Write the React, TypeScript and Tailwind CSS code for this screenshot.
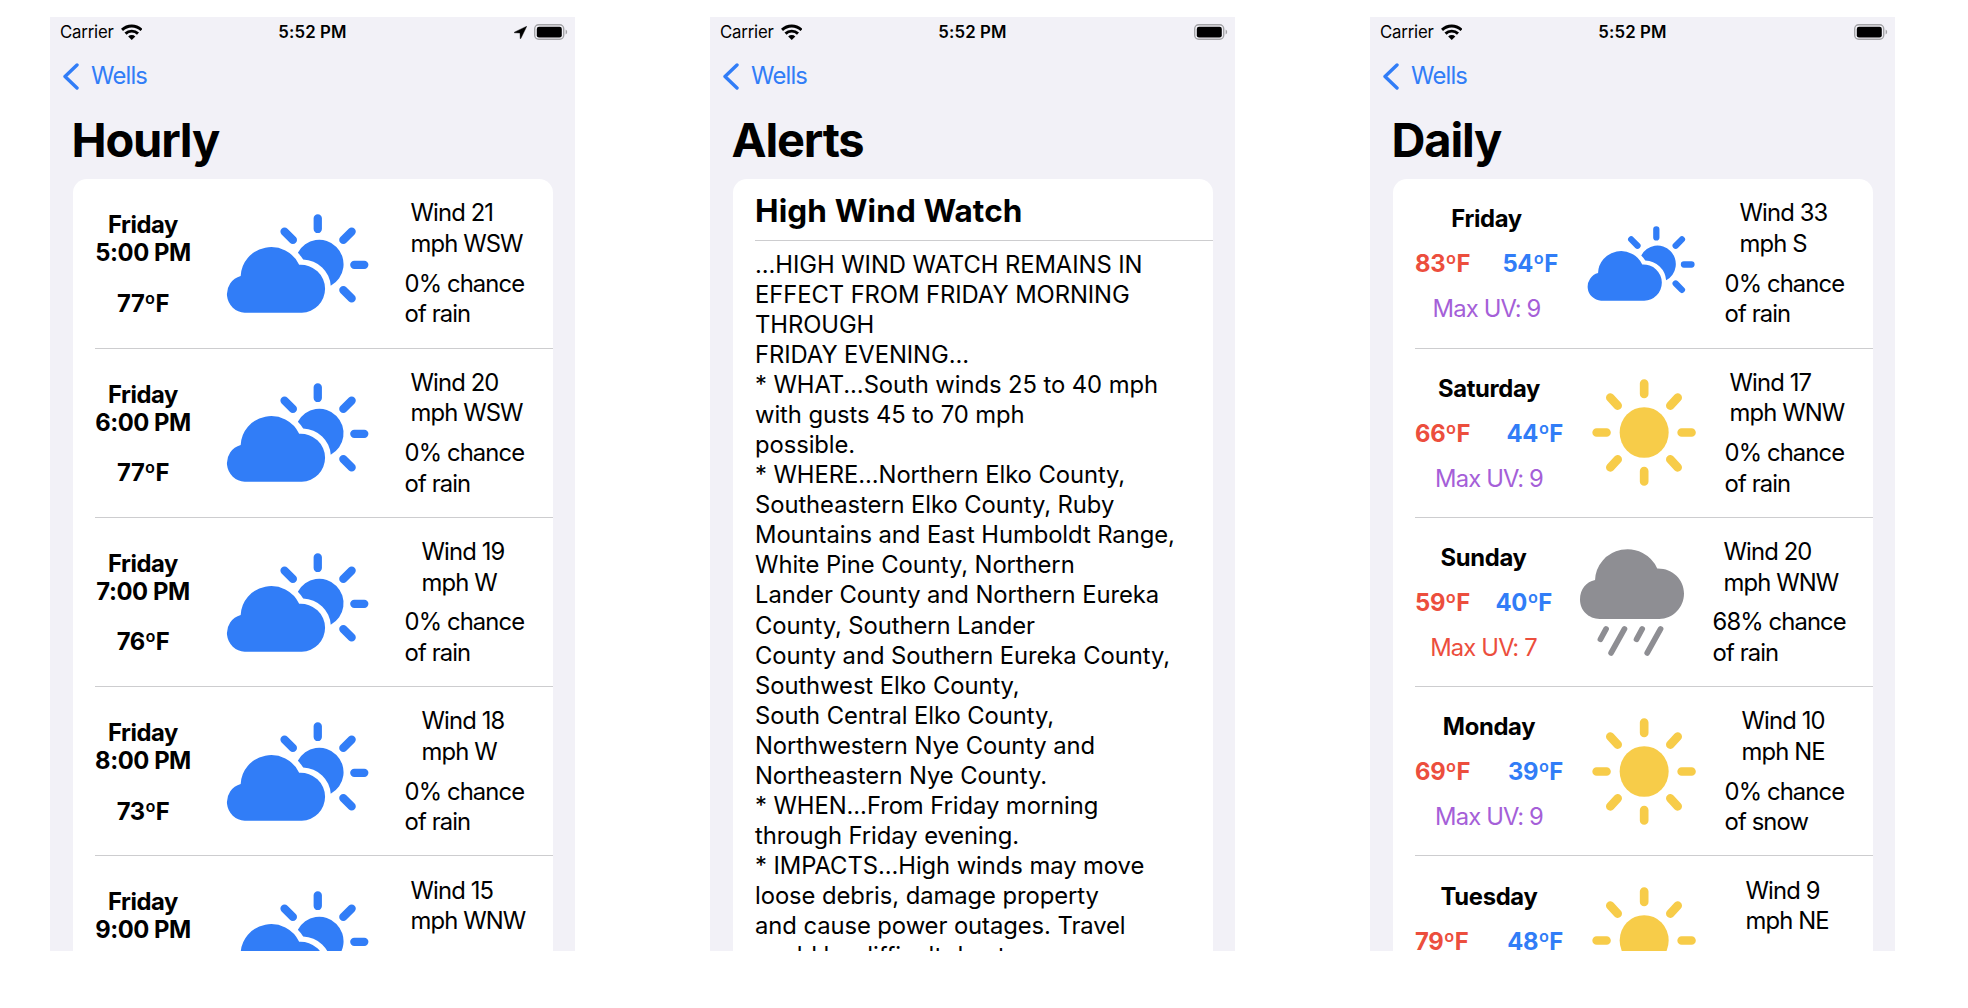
import type { ReactNode } from "react";

type IconKind = "cloudSun" | "sun" | "rain";

interface Conditions {
  wind: string[];
  windInset: string;
  chance: string[];
  rightWidth: string;
}

interface HourlyEntry extends Conditions {
  time: string;
  temp: string;
}

interface DailyEntry extends Conditions {
  day: string;
  high: string;
  low: string;
  uv: string;
  uvColor: string;
  icon: IconKind;
  leftWidth: string;
  iconInset: string;
}

const RAIN_0 = ["0% chance", "of rain"];
const SNOW_0 = ["0% chance", "of snow"];

const hourly: HourlyEntry[] = [
  { time: "5:00 PM", temp: "77ºF", wind: ["Wind 21", "mph WSW"], windInset: "pl-[6px]", chance: RAIN_0, rightWidth: "w-[148px]" },
  { time: "6:00 PM", temp: "77ºF", wind: ["Wind 20", "mph WSW"], windInset: "pl-[6px]", chance: RAIN_0, rightWidth: "w-[148px]" },
  { time: "7:00 PM", temp: "76ºF", wind: ["Wind 19", "mph W"], windInset: "pl-[17px]", chance: RAIN_0, rightWidth: "w-[148px]" },
  { time: "8:00 PM", temp: "73ºF", wind: ["Wind 18", "mph W"], windInset: "pl-[17px]", chance: RAIN_0, rightWidth: "w-[148px]" },
  { time: "9:00 PM", temp: "70ºF", wind: ["Wind 15", "mph WNW"], windInset: "pl-[6px]", chance: RAIN_0, rightWidth: "w-[148px]" },
];

const daily: DailyEntry[] = [
  { day: "Friday", high: "83ºF", low: "54ºF", uv: "9", uvColor: "text-[#a55fd8]", icon: "cloudSun", leftWidth: "w-[143px]", iconInset: "ml-[29px]", wind: ["Wind 33", "mph S"], windInset: "pl-[15px]", chance: RAIN_0, rightWidth: "w-[148px]" },
  { day: "Saturday", high: "66ºF", low: "44ºF", uv: "9", uvColor: "text-[#a55fd8]", icon: "sun", leftWidth: "w-[148px]", iconInset: "ml-[29px]", wind: ["Wind 17", "mph WNW"], windInset: "pl-[5px]", chance: RAIN_0, rightWidth: "w-[148px]" },
  { day: "Sunday", high: "59ºF", low: "40ºF", uv: "7", uvColor: "text-[#ec4e3d]", icon: "rain", leftWidth: "w-[137px]", iconInset: "ml-[28px]", wind: ["Wind 20", "mph WNW"], windInset: "pl-[11px]", chance: ["68% chance", "of rain"], rightWidth: "w-[160px]" },
  { day: "Monday", high: "69ºF", low: "39ºF", uv: "9", uvColor: "text-[#a55fd8]", icon: "sun", leftWidth: "w-[148px]", iconInset: "ml-[29px]", wind: ["Wind 10", "mph NE"], windInset: "pl-[17px]", chance: SNOW_0, rightWidth: "w-[148px]" },
  { day: "Tuesday", high: "79ºF", low: "48ºF", uv: "9", uvColor: "text-[#a55fd8]", icon: "sun", leftWidth: "w-[148px]", iconInset: "ml-[29px]", wind: ["Wind 9", "mph NE"], windInset: "pl-[21px]", chance: RAIN_0, rightWidth: "w-[148px]" },
];

const alertLines = [
  "...HIGH WIND WATCH REMAINS IN",
  "EFFECT FROM FRIDAY MORNING",
  "THROUGH",
  "FRIDAY EVENING...",
  "* WHAT...South winds 25 to 40 mph",
  "with gusts 45 to 70 mph",
  "possible.",
  "* WHERE...Northern Elko County,",
  "Southeastern Elko County, Ruby",
  "Mountains and East Humboldt Range,",
  "White Pine County, Northern",
  "Lander County and Northern Eureka",
  "County, Southern Lander",
  "County and Southern Eureka County,",
  "Southwest Elko County,",
  "South Central Elko County,",
  "Northwestern Nye County and",
  "Northeastern Nye County.",
  "* WHEN...From Friday morning",
  "through Friday evening.",
  "* IMPACTS...High winds may move",
  "loose debris, damage property",
  "and cause power outages. Travel",
  "could be difficult due to",
];

function CloudSunIcon({ className }: { className: string }) {
  return (
    <svg viewBox="18 28 430 298" className={`overflow-visible ${className}`} fill="#317df7" stroke="none">
      <path d="M74 325A56 56 0 0 1 62 215A92 90 0 0 1 238 181A74 72 0 0 1 316 253A71 72 0 0 1 246 325Z" />
      <path d="M234 145A73 73.500 0 1 1 333 244A86 84 0 0 0 250 165Q243 154 234 145Z" />
      <g stroke="#317df7" strokeWidth="25" strokeLinecap="round">
        <path d="M294 41V73M396 81L371 106M194 81L219 106M404 181H434M371 257L396 282" />
      </g>
    </svg>
  );
}

function SunIcon({ className }: { className: string }) {
  return (
    <svg viewBox="51 30 312 321" className={className}>
      <ellipse cx="207.5" cy="190.5" rx="73.5" ry="76" fill="#f7cc49" />
      <path
        d="M207.5 43.500V75M207.500 306V337.500M65 190.500H94.500M320 190.500H349.500M106 86L128 110M286 110L308 86M106 295L128 271M286 271L308 295"
        stroke="#f7cc49"
        strokeWidth="26"
        strokeLinecap="round"
        fill="none"
      />
    </svg>
  );
}

function RainIcon({ className }: { className: string }) {
  return (
    <svg viewBox="31 29 311 320" className={`overflow-visible ${className}`} fill="#8e8e93">
      <path d="M90 238C57 238 31 213 31 180C31 150 50 127 76 122A97 95 0 0 1 262 87C307 86 342 119 342 162C342 205 308 238 268 238Z" />
      <path
        d="M109 268L92 299M164 268L124 340M217 268L200 299M272 268L232 340"
        stroke="#8e8e93"
        strokeWidth="17"
        strokeLinecap="round"
      />
    </svg>
  );
}

function StatusBar({ location }: { location?: boolean }) {
  return (
    <div className="grid h-[28px] shrink-0 grid-cols-3 items-center pl-[10px] pr-[7px] pt-px text-[16.8px] leading-[28px]">
      <div className="flex items-center gap-[7px]">
        <span className="tracking-[-0.012em]">Carrier</span>
        <svg viewBox="0 0 21.500 16" className="h-[16px] w-[21.5px]" fill="none" stroke="#000" strokeWidth="2.900">
          <path d="M1 5.900A14 14 0 0 1 20.500 5.900" />
          <path d="M4.500 9.600A9 9 0 0 1 17 9.600" />
          <path d="M10.750 16L7.200 12.500A5 5 0 0 1 14.300 12.500Z" fill="#000" stroke="none" />
        </svg>
      </div>
      <span className="pr-[3px] text-center font-semibold tracking-[0.008em]">5:52 PM</span>
      <div className="flex items-center justify-end gap-[7px]">
        {location && (
          <svg viewBox="0 0 13 13" className="h-[13px] w-[13px]">
            <path d="M12.800 0.200L0.300 6.200Q0 6.700 0.600 6.800L6 7L6.200 12.400Q6.400 13 6.800 12.600Z" fill="#000" stroke="#000" strokeWidth="0.400" />
          </svg>
        )}
        <svg viewBox="0 0 33.500 16" className="mb-px h-[16px] w-[33.5px]">
          <rect x="0.700" y="0.700" width="29" height="14.600" rx="4" fill="none" stroke="#a3a3a6" strokeWidth="1.400" />
          <rect x="2.800" y="2.700" width="25" height="10.700" rx="2.200" fill="#000" />
          <path d="M31.600 5.500Q33.200 6.200 33.200 8T31.600 10.500Z" fill="#a3a3a6" />
        </svg>
      </div>
    </div>
  );
}

function Phone({ title, location, children }: { title: string; location?: boolean; children: ReactNode }) {
  return (
    <section className="flex h-[933.500px] w-[525px] flex-col overflow-hidden bg-[#f2f1f7]">
      <StatusBar location={location} />
      <nav className="flex h-[61.600px] shrink-0 items-center gap-[12px] pl-[13px] pt-px text-[23.8px] tracking-[-0.035em] text-[#317df7]">
        <svg viewBox="0 0 16 27" className="h-[27px] w-[16px]" fill="none" stroke="#317df7" strokeWidth="3.400" strokeLinecap="round" strokeLinejoin="round">
          <path d="M14 2L2 13.500L14 25" />
        </svg>
        <span>Wells</span>
      </nav>
      <h1 className="flex h-[72.700px] shrink-0 items-center pb-[5px] pl-[21.500px] text-[47px] font-bold tracking-[-0.025em]">
        {title}
      </h1>
      <div className="mx-[22.500px] min-h-0 flex-1 overflow-hidden rounded-t-[14px] bg-white">{children}</div>
    </section>
  );
}

function Row({ children }: { children: ReactNode }) {
  return (
    <div className="ml-[22.500px] flex h-[169.300px] items-center whitespace-nowrap border-b border-[#cdcdcf] text-[23.8px]">
      {children}
    </div>
  );
}

function ConditionsText({ entry }: { entry: Conditions }) {
  return (
    <div className={`ml-auto flex shrink-0 flex-col gap-[9px] pt-[1.500px] leading-[30.6px] tracking-[-0.037em] ${entry.rightWidth}`}>
      <div className={entry.windInset}>
        {entry.wind.map((line) => (
          <p key={line}>{line}</p>
        ))}
      </div>
      <div>
        {entry.chance.map((line) => (
          <p key={line}>{line}</p>
        ))}
      </div>
    </div>
  );
}

function DayIcon({ kind, inset }: { kind: IconKind; inset: string }) {
  return (
    <div className={inset}>
      {kind === "cloudSun" && <CloudSunIcon className="h-[75px] w-[108px]" />}
      {kind === "sun" && <SunIcon className="h-[107px] w-[104px]" />}
      {kind === "rain" && <RainIcon className="h-[107px] w-[104px]" />}
    </div>
  );
}

function HourlyList() {
  return (
    <>
      {hourly.map((entry) => (
        <Row key={entry.time}>
          <div className="w-[96px] pt-[2px] text-center font-[650] leading-[28px] tracking-[-0.018em]">
            <p>Friday</p>
            <p>{entry.time}</p>
            <p className="mt-[22.400px]">{entry.temp}</p>
          </div>
          <CloudSunIcon className="ml-[35px] h-[99px] w-[143px]" />
          <ConditionsText entry={entry} />
        </Row>
      ))}
    </>
  );
}

function DailyList() {
  return (
    <>
      {daily.map((entry) => (
        <Row key={entry.day}>
          <div className={`flex flex-col gap-[17px] pt-[2px] text-center leading-[28px] ${entry.leftWidth}`}>
            <p className="font-[650] tracking-[-0.014em]">{entry.day}</p>
            <div className="flex justify-between font-[650] tracking-[-0.012em]">
              <span className="text-[#ec4e3d]">{entry.high}</span>
              <span className="text-[#317df7]">{entry.low}</span>
            </div>
            <p className={`tracking-[-0.035em] ${entry.uvColor}`}>Max UV: {entry.uv}</p>
          </div>
          <DayIcon kind={entry.icon} inset={entry.iconInset} />
          <ConditionsText entry={entry} />
        </Row>
      ))}
    </>
  );
}

function AlertDetails() {
  return (
    <div className="pl-[22.500px]">
      <h2 className="flex h-[61.500px] items-center border-b border-[#cdcdcf] pt-[2px] text-[31.500px] font-bold tracking-[0.004em]">
        High Wind Watch
      </h2>
      <div className="whitespace-nowrap pt-[9px] text-[23.8px] leading-[30.07px] tracking-[-0.003em]">
        {alertLines.map((line) => (
          <p key={line}>{line}</p>
        ))}
      </div>
    </div>
  );
}

export default function App() {
  return (
    <main className="flex h-[1008px] w-[1968px] gap-[135px] overflow-hidden bg-white pl-[50px] pt-[17px] font-['Inter',sans-serif] text-black">
      <Phone title="Hourly" location>
        <HourlyList />
      </Phone>
      <Phone title="Alerts">
        <AlertDetails />
      </Phone>
      <Phone title="Daily">
        <DailyList />
      </Phone>
    </main>
  );
}
